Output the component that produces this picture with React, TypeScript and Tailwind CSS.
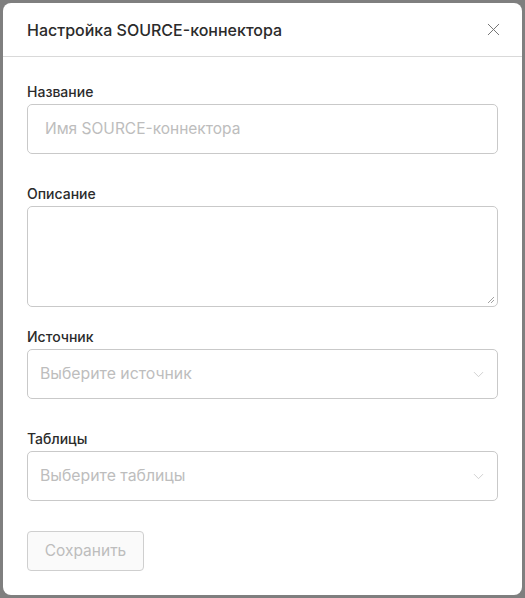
import { X, ChevronDown } from "lucide-react";

const font = { fontFamily: "Inter, 'Noto Sans', sans-serif" };

function SelectField({ placeholder }: { placeholder: string }) {
  return (
    <div className="flex h-[50px] w-full items-center justify-between rounded-[5px] border border-[#c9c9c9] bg-white pl-3 pr-[10px]">
      <span className="text-[15.8px] text-[#bdbdbd]">{placeholder}</span>
      <ChevronDown className="h-[17px] w-[17px] text-[#c4c4c4]" strokeWidth={1.1} />
    </div>
  );
}

export default function App() {
  return (
    <div className="h-[598px] w-[525px] bg-[#7f7f7f] p-[3px]" style={font}>
      <div className="flex h-[592px] w-[519px] flex-col overflow-hidden rounded-[8px] bg-white">
        <div className="flex h-[54px] shrink-0 items-center justify-between border-b border-[#d9d9d9] pl-6 pr-[18px]">
          <h2 className="text-[16px] font-medium text-[#2b2b2b]">Настройка SOURCE-коннектора</h2>
          <X className="h-[21px] w-[21px] text-[#707070]" strokeWidth={1.1} />
        </div>

        <div className="flex flex-col px-6 pt-[25px]">
          <label className="mb-[2px] text-[14px] font-medium leading-5 text-[#2b2b2b]">Название</label>
          <div className="flex h-[50px] items-center rounded-[5px] border border-[#c9c9c9] px-[17px]">
            <span className="text-[15.5px] text-[#bdbdbd]">Имя SOURCE-коннектора</span>
          </div>

          <label className="mb-[2px] mt-[30px] text-[14px] font-medium leading-5 text-[#2b2b2b]">Описание</label>
          <div className="relative h-[101px] rounded-[5px] border border-[#c9c9c9]">
            <svg className="absolute bottom-[2px] right-[2px]" width="8" height="8" viewBox="0 0 8 8">
              <path d="M7 1L1 7M7 4L4 7" stroke="#8a8a8a" strokeWidth="0.8" />
            </svg>
          </div>

          <label className="mb-[2px] mt-[20px] text-[14px] font-medium leading-5 text-[#2b2b2b]">Источник</label>
          <SelectField placeholder="Выберите источник" />

          <label className="mb-[2px] mt-[30px] text-[14px] font-medium leading-5 text-[#2b2b2b]">Таблицы</label>
          <SelectField placeholder="Выберите таблицы" />

          <button className="mt-[30px] h-[40px] w-[117px] rounded-[4px] border border-[#cfcfcf] bg-[#fafafa] text-[15.5px] text-[#bdbdbd]">
            Сохранить
          </button>
        </div>
      </div>
    </div>
  );
}
